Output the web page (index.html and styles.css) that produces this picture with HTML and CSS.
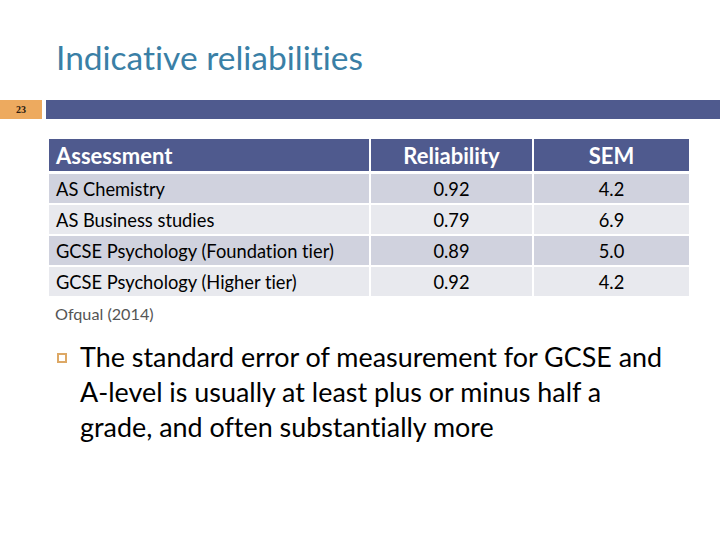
FILE: index.html
```html
<!DOCTYPE html>
<html>
<head>
<meta charset="utf-8">
<link rel="stylesheet" href="styles.css">
</head>
<body>
<div class="slide">
  <h1 class="title">Indicative reliabilities</h1>
  <div class="band">
    <div class="num">23</div>
    <div class="bar"></div>
  </div>
  <div class="content">
    <table class="data">
      <thead>
        <tr><th class="c1">Assessment</th><th class="c2">Reliability</th><th class="c3">SEM</th></tr>
      </thead>
      <tbody>
        <tr class="odd"><td class="c1">AS Chemistry</td><td class="c2">0.92</td><td class="c3">4.2</td></tr>
        <tr class="even"><td class="c1">AS Business studies</td><td class="c2">0.79</td><td class="c3">6.9</td></tr>
        <tr class="odd"><td class="c1">GCSE Psychology (Foundation tier)</td><td class="c2">0.89</td><td class="c3">5.0</td></tr>
        <tr class="even"><td class="c1">GCSE Psychology (Higher tier)</td><td class="c2">0.92</td><td class="c3">4.2</td></tr>
      </tbody>
    </table>
    <p class="source">Ofqual (2014)</p>
    <ul class="bullets">
      <li><span class="mark"></span><span class="text">The standard error of measurement for GCSE and A-level is usually at least plus or minus half a grade, and often substantially more</span></li>
    </ul>
  </div>
</div>
</body>
</html>
```
FILE: styles.css
```css
* { box-sizing: border-box; }
html, body { margin: 0; padding: 0; background: #fff; }
.slide {
  width: 720px;
  height: 540px;
  overflow: hidden;
  font-family: Lato, "Open Sans", sans-serif;
  font-variant-ligatures: none;
  color: #000;
}
.title {
  margin: 0;
  padding: 37px 0 0 56px;
  height: 100px;
  font-weight: 400;
  font-size: 33.5px;
  line-height: 40px;
  color: #3A7FA6;
}
.band {
  display: flex;
  height: 19px;
  gap: 4px;
}
.num {
  width: 42px;
  background: #EDAA5F;
  font-family: "Liberation Serif", serif;
  font-size: 10px;
  font-weight: 700;
  color: #2a1a10;
  display: flex;
  align-items: center;
  justify-content: center;
}
.bar {
  flex: 1;
  background: #4F5A8E;
}
.content {
  padding: 20px 0 0 49px;
}
.data {
  border-collapse: separate;
  border-spacing: 0;
  width: 640px;
}
.data th, .data td {
  padding: 0;
  border-right: 2px solid #fff;
  border-bottom: 2px solid #fff;
}
.data th.c3, .data td.c3 { border-right: none; }
.data th {
  background: #4F5A8E;
  color: #fff;
  font-weight: 700;
  font-size: 22px;
  height: 35px;
  border-bottom-width: 3px;
}
.data td {
  font-size: 18.3px;
  height: 31px;
}
.c1 { width: 322px; text-align: left; padding-left: 7px !important; }
.c2 { width: 163px; text-align: center; }
.c3 { width: 155px; text-align: center; }
.odd td { background: #D0D2DE; }
.even td { background: #E8E9EE; }
.source {
  margin: 6px 0 0 6px;
  font-size: 16.2px;
  color: #555;
}
.bullets {
  list-style: none;
  margin: 16px 0 0 0;
  padding: 0;
}
.bullets li {
  display: flex;
  align-items: flex-start;
}
.mark {
  flex: none;
  width: 10px;
  height: 10px;
  border: 2px solid #DDA865;
  margin: 14px 0 0 8px;
}
.text {
  margin-left: 13px;
  width: 595px;
  font-size: 26.9px;
  line-height: 35px;
}
```
